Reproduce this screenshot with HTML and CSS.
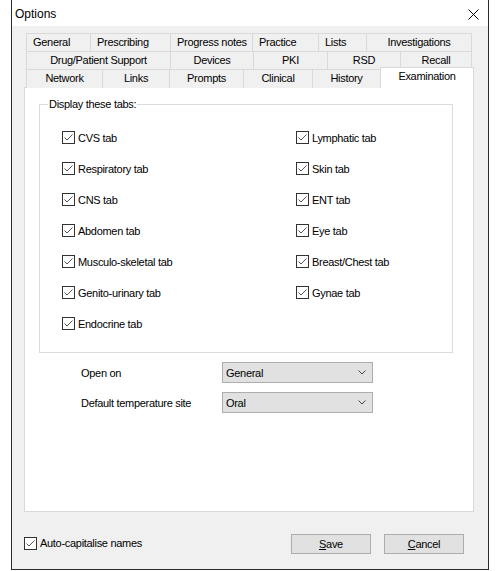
FILE: index.html
```html
<!DOCTYPE html>
<html lang="en">
<head>
    <meta charset="UTF-8">
    <title>Options</title>
    <link rel="stylesheet" href="styles.css">
</head>
<body>
    <div class="window">
        <div class="titlebar">
            <span class="title">Options</span>
            <svg class="close" width="11" height="11" viewBox="0 0 11 11">
                <path d="M0.5 0.5 L10.5 10.5 M10.5 0.5 L0.5 10.5" stroke="#000" stroke-width="1" fill="none"/>
            </svg>
        </div>
        <div class="dialog">
            <div class="tabstrip">
                <div class="tabrow row-1">
                    <div class="tab left">General</div>
                    <div class="tab left">Prescribing</div>
                    <div class="tab left">Progress notes</div>
                    <div class="tab left">Practice</div>
                    <div class="tab left">Lists</div>
                    <div class="tab">Investigations</div>
                </div>
                <div class="tabrow row-2">
                    <div class="tab">Drug/Patient Support</div>
                    <div class="tab">Devices</div>
                    <div class="tab">PKI</div>
                    <div class="tab">RSD</div>
                    <div class="tab">Recall</div>
                </div>
                <div class="tabrow row-3">
                    <div class="tab">Network</div>
                    <div class="tab">Links</div>
                    <div class="tab">Prompts</div>
                    <div class="tab">Clinical</div>
                    <div class="tab">History</div>
                    <div class="tab selected">Examination</div>
                </div>
            </div>

            <div class="tabpage">
                <fieldset class="group">
                    <legend>Display these tabs:</legend>
                    <div class="checklist">
                        <label class="checkitem"><span class="box"><svg viewBox="0 0 11 11"><polyline points="1.5,5.5 4,8 9.5,2.5"/></svg></span>CVS tab</label>
                        <label class="checkitem"><span class="box"><svg viewBox="0 0 11 11"><polyline points="1.5,5.5 4,8 9.5,2.5"/></svg></span>Lymphatic tab</label>
                        <label class="checkitem"><span class="box"><svg viewBox="0 0 11 11"><polyline points="1.5,5.5 4,8 9.5,2.5"/></svg></span>Respiratory tab</label>
                        <label class="checkitem"><span class="box"><svg viewBox="0 0 11 11"><polyline points="1.5,5.5 4,8 9.5,2.5"/></svg></span>Skin tab</label>
                        <label class="checkitem"><span class="box"><svg viewBox="0 0 11 11"><polyline points="1.5,5.5 4,8 9.5,2.5"/></svg></span>CNS tab</label>
                        <label class="checkitem"><span class="box"><svg viewBox="0 0 11 11"><polyline points="1.5,5.5 4,8 9.5,2.5"/></svg></span>ENT tab</label>
                        <label class="checkitem"><span class="box"><svg viewBox="0 0 11 11"><polyline points="1.5,5.5 4,8 9.5,2.5"/></svg></span>Abdomen tab</label>
                        <label class="checkitem"><span class="box"><svg viewBox="0 0 11 11"><polyline points="1.5,5.5 4,8 9.5,2.5"/></svg></span>Eye tab</label>
                        <label class="checkitem"><span class="box"><svg viewBox="0 0 11 11"><polyline points="1.5,5.5 4,8 9.5,2.5"/></svg></span>Musculo-skeletal tab</label>
                        <label class="checkitem"><span class="box"><svg viewBox="0 0 11 11"><polyline points="1.5,5.5 4,8 9.5,2.5"/></svg></span>Breast/Chest tab</label>
                        <label class="checkitem"><span class="box"><svg viewBox="0 0 11 11"><polyline points="1.5,5.5 4,8 9.5,2.5"/></svg></span>Genito-urinary tab</label>
                        <label class="checkitem"><span class="box"><svg viewBox="0 0 11 11"><polyline points="1.5,5.5 4,8 9.5,2.5"/></svg></span>Gynae tab</label>
                        <label class="checkitem"><span class="box"><svg viewBox="0 0 11 11"><polyline points="1.5,5.5 4,8 9.5,2.5"/></svg></span>Endocrine tab</label>
                    </div>
                </fieldset>

                <div class="fields">
                    <div class="field">
                        <span class="field-label">Open on</span>
                        <div class="combo">
                            <span>General</span>
                            <svg class="chevron" width="8" height="5" viewBox="0 0 8 5"><polyline points="0.5,0.5 4,4 7.5,0.5"/></svg>
                        </div>
                    </div>
                    <div class="field">
                        <span class="field-label">Default temperature site</span>
                        <div class="combo">
                            <span>Oral</span>
                            <svg class="chevron" width="8" height="5" viewBox="0 0 8 5"><polyline points="0.5,0.5 4,4 7.5,0.5"/></svg>
                        </div>
                    </div>
                </div>
            </div>

            <div class="footer">
                <label class="checkitem"><span class="box"><svg viewBox="0 0 11 11"><polyline points="1.5,5.5 4,8 9.5,2.5"/></svg></span>Auto-capitalise names</label>
                <div class="buttons">
                    <button class="btn"><u>S</u>ave</button>
                    <button class="btn"><u>C</u>ancel</button>
                </div>
            </div>
        </div>
    </div>
</body>
</html>
```

FILE: styles.css
```css
body {
    margin: 0;
    background: #fff;
    font-family: "Liberation Sans", Arial, sans-serif;
    font-size: 11px;
    letter-spacing: -0.3px;
    color: #000;
}

.window {
    box-sizing: border-box;
    width: 478px;
    height: 571px;
    margin: -1px 0 0 11px;
    border: 1px solid #2b2b2b;
    display: flex;
    flex-direction: column;
}

/* title bar */
.titlebar {
    height: 26px;
    background: #fff;
    display: flex;
    align-items: center;
    justify-content: space-between;
    padding: 0 9px 0 3px;
}
.title {
    font-size: 12px;
    letter-spacing: 0;
    margin-top: 1px;
}
.close {
    margin-top: 2px;
}

.dialog {
    flex: 1;
    background: #f0f0f0;
    padding-top: 7px;
}

/* tab strip */
.tabstrip {
    margin-left: 14px;
    position: relative;
    z-index: 1;
}
.tabrow {
    display: grid;
    height: 18px;
}
.row-1 { grid-template-columns: 64px 80px 82px 66px 48px 106px; }
.row-2 { grid-template-columns: 144px 83px 74px 73px 72px; }
.row-3 { grid-template-columns: 76px 67px 74px 69px 68px 94px; }

.tab {
    box-sizing: border-box;
    border-top: 1px solid #d9d9d9;
    border-left: 1px solid #d9d9d9;
    background: #f0f0f0;
    line-height: 17px;
    text-align: center;
    white-space: nowrap;
}
.tab:last-child {
    border-right: 1px solid #d9d9d9;
}
.tab.left {
    text-align: left;
    padding-left: 6px;
}
.tab.selected {
    position: relative;
    align-self: start;
    height: 21px;
    margin-top: -2px;
    background: #fff;
    line-height: 16px;
}

/* tab page */
.tabpage {
    box-sizing: border-box;
    width: 450px;
    height: 425px;
    margin-left: 12px;
    border: 1px solid #d9d9d9;
    background: #fff;
}

.group {
    box-sizing: border-box;
    width: 414px;
    margin: 9px 0 0 14px;
    padding: 11px 0 13px 22px;
    border: 1px solid #dcdcdc;
}
.group legend {
    padding: 0 1px;
    margin-left: -14px;
    line-height: 14px;
}

.checklist {
    display: grid;
    grid-template-columns: 234px 1fr;
    grid-auto-rows: 31px;
}

.checkitem {
    display: flex;
    align-items: center;
    white-space: nowrap;
}
.box {
    box-sizing: border-box;
    width: 13px;
    height: 13px;
    border: 1px solid #333;
    background: #fff;
    margin-right: 3px;
    display: flex;
}
.box svg {
    width: 11px;
    height: 11px;
    fill: none;
    stroke: #555;
    stroke-width: 1;
}

/* combos */
.fields {
    margin: 9px 0 0 56px;
    display: flex;
    flex-direction: column;
    gap: 9px;
}
.field {
    display: flex;
    align-items: center;
}
.field-label {
    width: 141px;
}
.combo {
    box-sizing: border-box;
    width: 151px;
    height: 21px;
    border: 1px solid #adadad;
    background: #e1e1e1;
    display: flex;
    align-items: center;
    justify-content: space-between;
    padding: 0 6px 0 3px;
}
.chevron {
    fill: none;
    stroke: #444;
    stroke-width: 1;
}

/* footer */
.footer {
    margin: 22px 0 0 12px;
    display: flex;
    align-items: center;
    justify-content: space-between;
    padding-right: 24px;
}
.footer .checkitem {
    margin-top: -2px;
}
.buttons {
    display: flex;
    gap: 13px;
}
.btn {
    box-sizing: border-box;
    width: 80px;
    height: 20px;
    border: 1px solid #adadad;
    background: #e1e1e1;
    font-family: "Liberation Sans", Arial, sans-serif;
    font-size: 11px;
    letter-spacing: -0.3px;
    color: #000;
    padding: 0;
}
```
